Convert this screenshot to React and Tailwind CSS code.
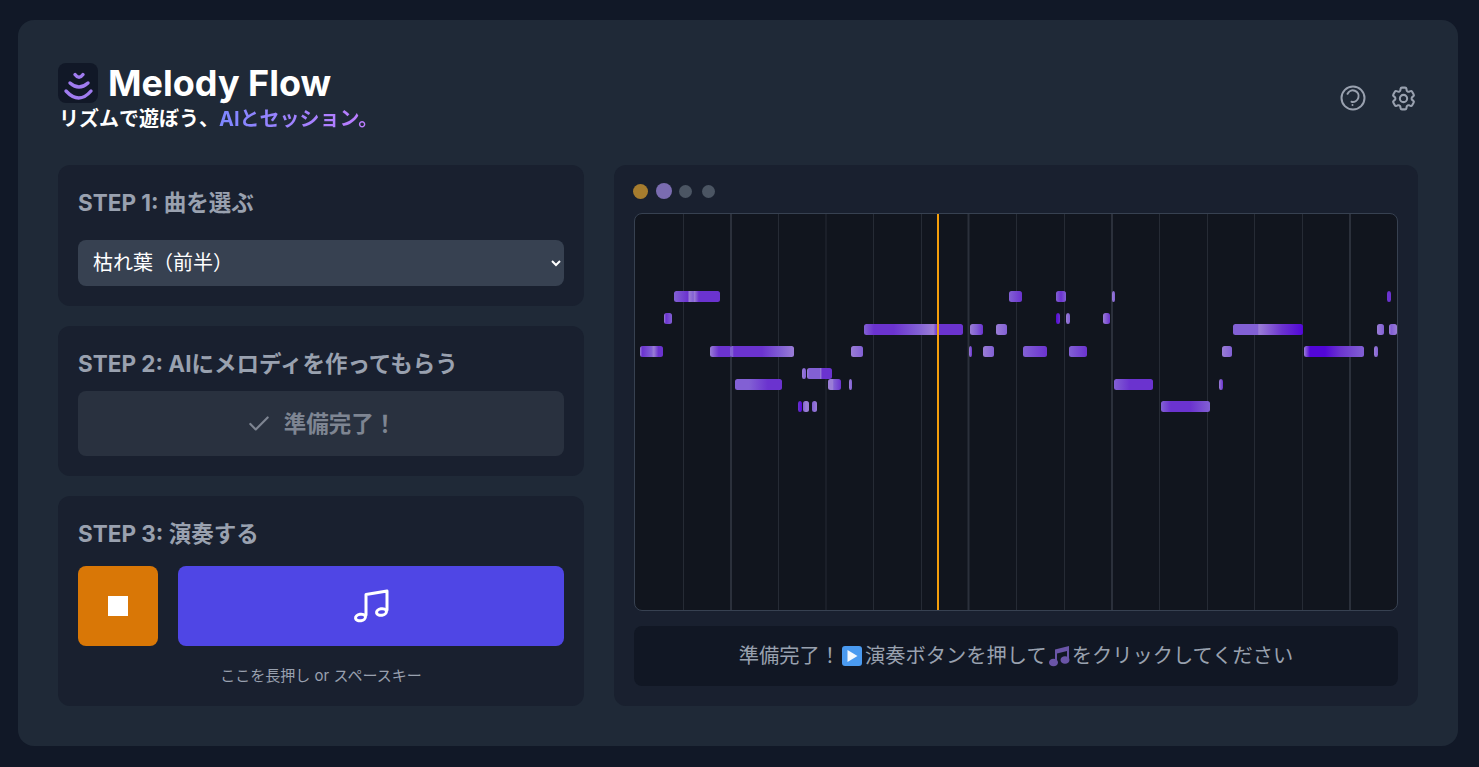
import React from 'react';
import { Check } from 'lucide-react';

const L = '#9a7dd6';
const P = '#8260d4';
const M = '#6b33cf';
const D = '#5206d8';

const gridLines = [
  [683.5, 1], [731, 2], [778.5, 1], [826, 1], [873.5, 1], [921.5, 1], [968.5, 2],
  [1016.5, 1], [1064.5, 1], [1112, 2], [1159.5, 1], [1207.5, 1], [1254.5, 1], [1302.5, 1], [1350, 2],
];

// x, width, top, colour stops
const notes = [
  [674, 46, 291, [[0, P], [0.3, M], [0.33, L], [0.42, P], [0.44, L], [0.54, M], [1, M]]],
  [664, 8, 313, [[0, L], [0.25, M], [1, P]]],
  [640, 23, 346, [[0, L], [0.1, M], [0.5, P], [0.6, L], [0.8, M], [1, M]]],
  [710, 22, 346, [[0, L], [0.4, M], [1, M]]],
  [730, 64, 346, [[0, P], [0.04, P], [0.06, M], [0.5, M], [0.8, P], [1, L]]],
  [851, 12, 346, [[0, L], [1, P]]],
  [802, 4, 368, [[0, L], [1, P]]],
  [807, 25, 368, [[0, L], [0.1, P], [0.5, P], [0.55, L], [0.6, M], [1, M]]],
  [735, 47, 379, [[0, P], [0.3, P], [0.7, M], [1, M]]],
  [828, 13, 379, [[0, L], [0.35, L], [0.45, P], [1, M]]],
  [849, 3, 379, [[0, L], [1, P]]],
  [798, 4, 401, [[0, M], [1, D]]],
  [803, 6, 401, [[0, P], [0.5, L], [1, L]]],
  [812, 5, 401, [[0, P], [1, L]]],
  [864, 99, 324, [[0, P], [0.1, M], [0.3, M], [0.55, P], [0.7, L], [0.74, M], [1, M]]],
  [970, 13, 324, [[0, L], [0.5, P], [1, M]]],
  [996, 11, 324, [[0, L], [1, P]]],
  [1009, 13, 291, [[0, P], [1, M]]],
  [1056, 10, 291, [[0, P], [0.5, M], [1, P]]],
  [1112, 3, 291, [[0, L], [1, P]]],
  [1387, 4, 291, [[0, M], [1, M]]],
  [1056, 4, 313, [[0, D], [1, M]]],
  [1066, 4, 313, [[0, L], [1, P]]],
  [1103, 7, 313, [[0, L], [1, M]]],
  [1233, 70, 324, [[0, P], [0.35, P], [0.37, L], [0.7, M], [1, D]]],
  [1377, 7, 324, [[0, L], [1, P]]],
  [1389, 8, 324, [[0, L], [0.3, P], [1, L]]],
  [969, 3, 346, [[0, L], [1, M]]],
  [983, 11, 346, [[0, L], [1, P]]],
  [1023, 24, 346, [[0, P], [1, M]]],
  [1069, 18, 346, [[0, P], [1, M]]],
  [1222, 10, 346, [[0, L], [1, P]]],
  [1304, 60, 346, [[0, L], [0.1, D], [0.35, D], [0.6, M], [1, P]]],
  [1374, 4, 346, [[0, L], [1, P]]],
  [1114, 39, 379, [[0, P], [0.4, M], [1, M]]],
  [1219, 4, 379, [[0, L], [1, M]]],
  [1161, 49, 401, [[0, P], [0.2, M], [0.6, M], [1, P]]],
];

function PianoRoll() {
  return (
    <svg className="block w-full h-full" viewBox="635 214 762 396" preserveAspectRatio="none">
      <defs>
        {notes.map((n, i) => (
          <linearGradient key={i} id={`note-${i}`} x1="0" x2="1" y1="0" y2="0">
            {n[3].map(([o, c], j) => <stop key={j} offset={o} stopColor={c} />)}
          </linearGradient>
        ))}
      </defs>
      {gridLines.map(([x, w]) => (
        <rect key={x} x={x - w / 2} y="214" width={w} height="396" fill={w === 2 ? '#2b303b' : '#262b35'} />
      ))}
      {notes.map((n, i) => (
        <rect key={i} x={n[0]} y={n[2]} width={n[1]} height="11" rx="2.5" fill={`url(#note-${i})`} />
      ))}
      <rect x="937" y="214" width="2" height="396" fill="#f59e0b" />
    </svg>
  );
}

function Logo() {
  return (
    <div className="w-10 h-10 rounded-lg bg-[#111827] shrink-0">
      <svg width="40" height="40" viewBox="0 0 40 40" fill="none" stroke="#a07cf0" strokeWidth="3.4" strokeLinecap="round">
        <path d="M17 11.5Q21 17 25 11.5" />
        <path d="M12 20Q21 28 30 20" />
        <path d="M8 28Q21 42 33 28" />
      </svg>
    </div>
  );
}

function StepTitle({ children }) {
  return <h2 className="text-[22.5px] leading-7 font-bold text-gray-400">{children}</h2>;
}

function PlayGlyph() {
  return (
    <svg className="inline-block align-[-4px]" width="25" height="22" viewBox="0 0 25 22" role="img" aria-label="play">
      <rect x="2" y="1" width="20" height="20" rx="3" fill="#4a9af0" />
      <path d="M7.5 5v12l10-6z" fill="#f2f7fd" />
    </svg>
  );
}

function NotesGlyph() {
  return (
    <svg className="inline-block align-[-4px]" width="25" height="22" viewBox="0 0 25 22" role="img" aria-label="music">
      <path d="M8 4.5 22 1v14h-2V6L10 8.5V18H8z" fill="#6a55a8" />
      <ellipse cx="6.5" cy="17.5" rx="4.5" ry="3.8" fill="#6a55a8" />
      <ellipse cx="18" cy="15" rx="4.5" ry="3.8" fill="#6a55a8" />
    </svg>
  );
}

export default function App() {
  return (
    <div className="min-h-[767px] bg-[#111827] pt-5 pl-[18px] font-['Inter','Noto_Sans_CJK_JP',sans-serif]">
      <div className="w-[1440px] bg-[#1f2937] rounded-2xl p-10">
        <header className="flex items-center justify-between mb-8">
          <div>
            <div className="flex items-center gap-2.5 h-[45px]">
              <Logo />
              <h1 className="text-4xl font-bold text-white">Melody Flow</h1>
            </div>
            <p className="h-7 pl-px text-xl leading-7 font-bold text-white">
              リズムで遊ぼう、<span className="bg-gradient-to-r from-indigo-400 to-purple-400 bg-clip-text text-transparent">AIとセッション。</span>
            </p>
          </div>
          <div className="flex items-center gap-[23px] mt-[3px] text-gray-400">
            <svg width="26" height="26" viewBox="0 0 26 26" fill="none" stroke="currentColor" strokeWidth="2" strokeLinecap="round">
              <circle cx="13" cy="13" r="11.5" />
              <path d="M7.5 8.8A5.8 5.8 0 1 1 11.5 16.8" />
              <circle cx="12.5" cy="20" r="1" fill="currentColor" stroke="none" />
            </svg>
            <svg width="29" height="29" viewBox="0 0 24 24" fill="none" stroke="currentColor" strokeWidth="1.7" strokeLinecap="round" strokeLinejoin="round">
              <path d="M9.594 3.94c.09-.542.56-.94 1.11-.94h2.593c.55 0 1.02.398 1.11.94l.213 1.281c.063.374.313.686.645.87.074.04.147.083.22.127.325.196.72.257 1.075.124l1.217-.456a1.125 1.125 0 0 1 1.37.49l1.296 2.247a1.125 1.125 0 0 1-.26 1.431l-1.003.827c-.293.241-.438.613-.43.992a7.723 7.723 0 0 1 0 .255c-.008.378.137.75.43.991l1.004.827c.424.35.534.955.26 1.43l-1.298 2.247a1.125 1.125 0 0 1-1.369.491l-1.217-.456c-.355-.133-.75-.072-1.076.124a6.47 6.47 0 0 1-.22.128c-.331.183-.581.495-.644.869l-.213 1.281c-.09.543-.56.94-1.11.94h-2.594c-.55 0-1.019-.398-1.11-.94l-.213-1.281c-.062-.374-.312-.686-.644-.87a6.52 6.52 0 0 1-.22-.127c-.325-.196-.72-.257-1.076-.124l-1.217.456a1.125 1.125 0 0 1-1.369-.49l-1.297-2.247a1.125 1.125 0 0 1 .26-1.431l1.004-.827c.292-.24.437-.613.43-.991a6.932 6.932 0 0 1 0-.255c.007-.38-.138-.751-.43-.992l-1.004-.827a1.125 1.125 0 0 1-.26-1.43l1.297-2.247a1.125 1.125 0 0 1 1.37-.491l1.216.456c.356.133.751.072 1.076-.124.072-.044.146-.086.22-.128.332-.183.582-.495.644-.869l.214-1.28Z" />
              <path d="M15 12a3 3 0 1 1-6 0 3 3 0 0 1 6 0Z" />
            </svg>
          </div>
        </header>

        <main className="grid grid-cols-[526px_804px] gap-[30px]">
          <div className="flex flex-col gap-5">
            <section className="h-[141px] bg-[#19202f] rounded-xl px-5 pt-[24px]">
              <StepTitle>STEP 1: 曲を選ぶ</StepTitle>
              <select className="mt-[23px] w-full h-[46px] bg-[#374151] rounded-lg pl-[11px] text-xl text-white" defaultValue="a">
                <option value="a">枯れ葉（前半）</option>
              </select>
            </section>

            <section className="h-[150px] bg-[#19202f] rounded-xl px-5 pt-[24px]">
              <StepTitle>STEP 2: AIにメロディを作ってもらう</StepTitle>
              <button className="mt-[13px] w-full h-[65px] bg-[#29313f] rounded-lg flex items-center justify-center gap-3 text-[22.5px] font-bold text-[#7e8592]">
                <Check size={26} strokeWidth={2} />
                準備完了！
              </button>
            </section>

            <section className="h-[210px] bg-[#19202f] rounded-xl px-5 pt-[24px]">
              <StepTitle>STEP 3: 演奏する</StepTitle>
              <div className="mt-[18px] flex gap-5">
                <button className="w-20 h-20 shrink-0 bg-[#d97706] rounded-lg flex items-center justify-center">
                  <span className="block w-5 h-5 bg-white" />
                </button>
                <button className="flex-1 h-20 bg-[#4f46e5] rounded-lg flex items-center justify-center">
                  <svg width="40" height="40" viewBox="0 0 40 40" fill="none" stroke="#fff" strokeWidth="3" strokeLinecap="round" strokeLinejoin="round">
                    <path d="M15 29V8.5L36 5V24" />
                    <ellipse cx="9.5" cy="31.5" rx="5" ry="3.2" transform="rotate(-10 9.5 31.5)" />
                    <ellipse cx="30.5" cy="26" rx="5" ry="3.2" transform="rotate(-10 30.5 26)" />
                  </svg>
                </button>
              </div>
              <p className="mt-[20px] text-center text-[15px] leading-5 text-gray-400">ここを長押し or スペースキー</p>
            </section>
          </div>

          <section className="h-[541px] bg-[#19202f] rounded-xl p-5 flex flex-col">
            <div className="flex items-center h-3 mb-4 gap-[7.5px] -ml-px">
              <span className="block w-[15px] h-[15px] rounded-full bg-[#a67c2e]" />
              <span className="block w-[16px] h-[16px] rounded-full bg-[#7a6cb0] -mr-px" />
              <span className="block w-[13px] h-[13px] rounded-full bg-[#4b5563] mx-px" />
              <span className="block w-[13px] h-[13px] rounded-full bg-[#4b5563] mx-px" />
            </div>
            <div className="h-[398px] bg-[#11151e] border border-[#374151] rounded-lg overflow-hidden">
              <PianoRoll />
            </div>
            <div className="mt-[15px] h-[60px] bg-[#111724] rounded-lg flex items-center justify-center text-[20.25px] text-gray-400">
              <span>準備完了！<PlayGlyph />演奏ボタンを押して<NotesGlyph />をクリックしてください</span>
            </div>
          </section>
        </main>
      </div>
    </div>
  );
}
